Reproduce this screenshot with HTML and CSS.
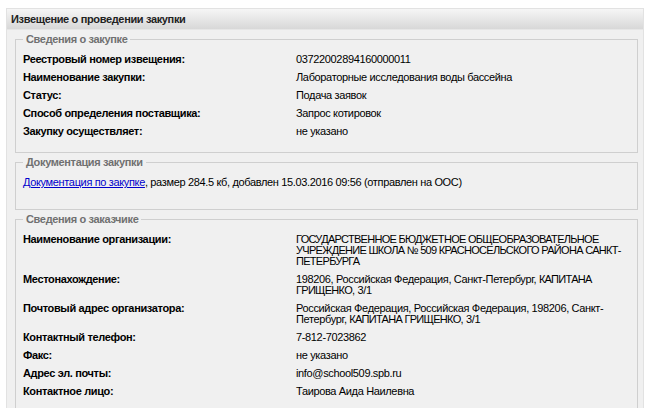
FILE: index.html
```html
<!DOCTYPE html>
<html lang="ru">
<head>
<meta charset="utf-8">
<title>Извещение о проведении закупки</title>
<link rel="stylesheet" href="styles.css">
</head>
<body>
<div class="panel">
  <div class="panel-head">Извещение о проведении закупки</div>
  <div class="panel-body">
    <fieldset class="box first">
      <legend>Сведения о закупке</legend>
      <table class="info">
        <tr><th>Реестровый номер извещения:</th><td>03722002894160000011</td></tr>
        <tr><th>Наименование закупки:</th><td>Лабораторные исследования воды бассейна</td></tr>
        <tr><th>Статус:</th><td>Подача заявок</td></tr>
        <tr><th>Способ определения поставщика:</th><td>Запрос котировок</td></tr>
        <tr><th>Закупку осуществляет:</th><td>не указано</td></tr>
      </table>
    </fieldset>
    <fieldset class="box docs">
      <legend>Документация закупки</legend>
      <p class="doc"><a href="#">Документация по закупке</a>, размер 284.5 кб, добавлен 15.03.2016 09:56 (отправлен на ООС)</p>
    </fieldset>
    <fieldset class="box">
      <legend>Сведения о заказчике</legend>
      <table class="info">
        <tr><th>Наименование организации:</th><td><span class="up">ГОСУДАРСТВЕННОЕ БЮДЖЕТНОЕ ОБЩЕОБРАЗОВАТЕЛЬНОЕ<br>УЧРЕЖДЕНИЕ ШКОЛА № 509 КРАСНОСЕЛЬСКОГО РАЙОНА САНКТ-<br>ПЕТЕРБУРГА</span></td></tr>
        <tr><th>Местонахождение:</th><td>198206, Российская Федерация, Санкт-Петербург, <span class="up">КАПИТАНА</span><br><span class="up">ГРИЩЕНКО</span>, 3/1</td></tr>
        <tr><th>Почтовый адрес организатора:</th><td>Российская Федерация, Российская Федерация, 198206, Санкт-<br>Петербург, <span class="up">КАПИТАНА ГРИЩЕНКО</span>, 3/1</td></tr>
        <tr><th>Контактный телефон:</th><td>7-812-7023862</td></tr>
        <tr><th>Факс:</th><td>не указано</td></tr>
        <tr><th>Адрес эл. почты:</th><td>info@school509.spb.ru</td></tr>
        <tr><th>Контактное лицо:</th><td>Таирова Аида Наилевна</td></tr>
      </table>
    </fieldset>
  </div>
</div>
</body>
</html>
```
FILE: styles.css
```css
html, body {
  margin: 0;
  padding: 0;
  background: #ffffff;
}
body {
  font-family: "Liberation Sans", Arial, sans-serif;
  font-size: 11px;
  letter-spacing: -0.35px;
  color: #000;
  padding: 8px 6px 0 6px;
}
.panel {
  width: 636px;
  border: 1px solid #e2e2e2;
  border-bottom: none;
  background: #f0f0f0;
}
.panel-head {
  height: 20px;
  line-height: 20px;
  padding-left: 4px;
  font-weight: bold;
  color: #222;
  background: linear-gradient(#f6f6f6, #d8d8d8);
  border-bottom: 1px solid #e6e6e6;
}
.panel-body {
  padding: 0 5px 20px 8px;
}
.box {
  margin: 3px 0 0 0;
  padding: 4px 7px 10px 7px;
  border: 1px solid #cfcfcf;
  min-width: 0;
}
.box.first {
  padding-bottom: 12px;
}
.box legend {
  padding: 0 3px;
  font-weight: bold;
  color: #707070;
  line-height: 13px;
}
.info {
  border-collapse: collapse;
  table-layout: fixed;
  width: 100%;
}
.info th, .info td {
  padding: 4px 0 3px 0;
  line-height: 11px;
  vertical-align: top;
  text-align: left;
  white-space: nowrap;
}
.info th {
  width: 273px;
  font-weight: bold;
}
.up {
  letter-spacing: -0.7px;
}
.docs {
  padding-bottom: 18px;
}
.doc {
  margin: 0;
  padding: 3px 0;
  line-height: 12px;
}
.doc a {
  color: #0000cc;
  text-decoration: underline;
}
```
